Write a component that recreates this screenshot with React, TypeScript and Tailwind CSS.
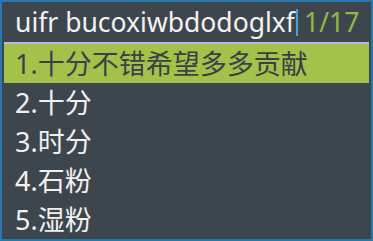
const items = ["十分不错希望多多贡献", "十分", "时分", "石粉", "湿粉"];

export default function App() {
  return (
    <div
      className="box-border flex h-[241px] w-[373px] flex-col border-2 border-[#2479ad] bg-[#3e464d] px-[2px]"
      style={{ fontFamily: '"Noto Sans", "Noto Sans CJK SC", sans-serif' }}
    >
      <div className="flex h-[40px] items-center pl-[11px] text-[26.5px] leading-none">
        <span className="text-[#f2f2f2]">uifr bucoxiwbdodoglxf</span>
        <span className="ml-[1px] h-[27px] w-[2px] bg-[#4a9ee0]" />
        <span className="ml-[6px] text-[#8fb84a]">1/17</span>
      </div>
      <div className="h-[2px] bg-[#b7bade]" />
      {items.map((item, idx) => (
        <div
          key={idx}
          className={`flex h-[39px] items-center pl-[11px] text-[27px] leading-none ${
            idx === 0 ? "bg-[#a4c24a] text-[#3a4148]" : "text-[#f0f0f0]"
          }`}
        >
          {idx + 1}.{item}
        </div>
      ))}
    </div>
  );
}
